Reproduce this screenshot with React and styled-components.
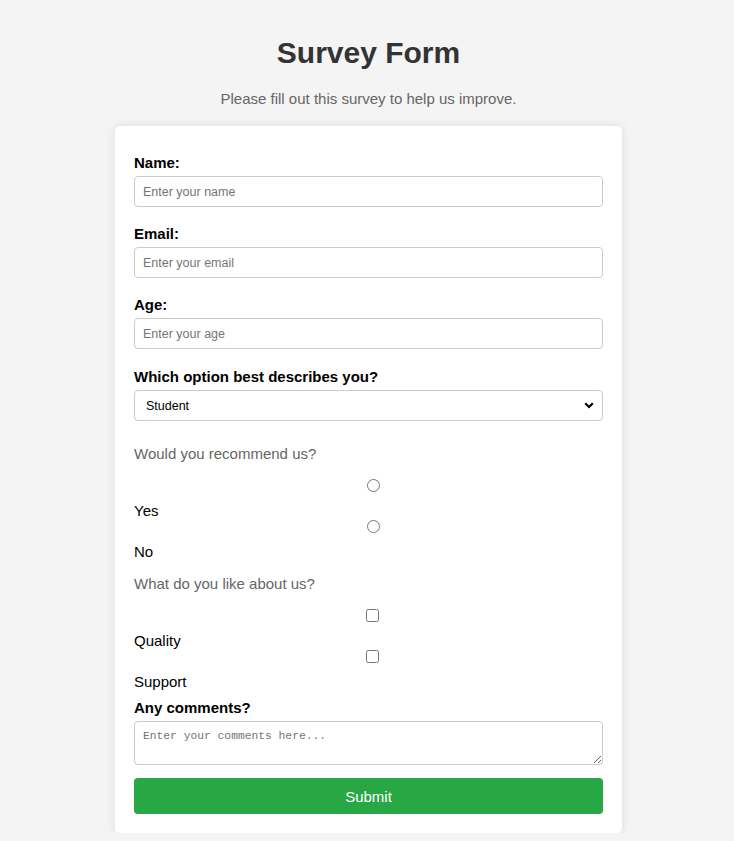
import React, { useState } from 'react';
import styled, { createGlobalStyle } from 'styled-components';

const GlobalStyle = createGlobalStyle`
  html, body {
    margin: 0;
    padding: 0;
    background: #f4f4f4;
  }
  body {
    font-family: 'Liberation Sans', Arial, sans-serif;
  }
`;

const Page = styled.div`
  padding: 36px 0 0 3px;
  display: flex;
  flex-direction: column;
  align-items: center;
`;

const Title = styled.h1`
  margin: 0;
  font-size: 30px;
  line-height: 34px;
  font-weight: bold;
  color: #333;
  text-align: center;
`;

const Subtitle = styled.p`
  margin: 20px 0 19px;
  font-size: 15px;
  line-height: 17px;
  color: #666;
  text-align: center;
`;

const Card = styled.form`
  width: 507px;
  box-sizing: border-box;
  padding: 28px 19px 19px;
  background: #fff;
  border-radius: 5px;
  box-shadow: 0 0 10px rgba(0, 0, 0, 0.1);
  display: flex;
  flex-direction: column;
`;

const Group = styled.div`
  display: flex;
  flex-direction: column;
  margin-top: ${(p) => p.$top || 0}px;
  margin-bottom: ${(p) => p.$gap || 0}px;
`;

const Label = styled.label`
  display: block;
  font-size: 15px;
  line-height: 17px;
  font-weight: bold;
  color: #000;
  margin-bottom: 5px;
`;

const fieldBase = `
  width: 100%;
  box-sizing: border-box;
  border: 1px solid #ccc;
  border-radius: 4px;
  padding: 8px;
  background: #fff;
  color: #000;
  margin: 0;
  outline: none;
`;

const TextInput = styled.input`
  ${fieldBase}
  height: 31px;
  font-family: 'Liberation Sans', Arial, sans-serif;
  font-size: 12.5px;
  &::placeholder {
    color: #757575;
  }
`;

const SelectWrap = styled.div`
  position: relative;
`;

const Select = styled.select`
  ${fieldBase}
  height: 31px;
  padding: 0 8px 0 11px;
  appearance: none;
  font-family: 'Liberation Sans', Arial, sans-serif;
  font-size: 12.5px;
`;

const Chevron = styled.svg`
  position: absolute;
  right: 9px;
  top: 12px;
  pointer-events: none;
`;

const Question = styled.p`
  margin: ${(p) => p.$top}px 0 16px;
  font-size: 15px;
  line-height: 17px;
  color: #666;
`;

const ControlLine = styled.div`
  height: 24px;
  box-sizing: border-box;
  padding: 1px 0 0 ${(p) => p.$shift}px;
  display: flex;
  justify-content: center;
  align-items: flex-start;
`;

const Choice = styled.input`
  margin: 0;
  width: 13px;
  height: 13px;
`;

const OptionLabel = styled.label`
  display: block;
  font-size: 15px;
  line-height: 17px;
  color: #000;
`;

const Comments = styled.textarea`
  ${fieldBase}
  height: 44px;
  font-family: 'Liberation Mono', 'Courier New', monospace;
  font-size: 11.3px;
  line-height: 13px;
  resize: vertical;
  &::placeholder {
    color: #757575;
  }
`;

const SubmitButton = styled.button`
  margin-top: 13px;
  width: 100%;
  height: 36px;
  border: none;
  border-radius: 4px;
  background: #28a745;
  color: #fff;
  font-family: 'Liberation Sans', Arial, sans-serif;
  font-size: 15px;
  cursor: pointer;
`;

function Option({ type, name, label, shift }) {
  return (
    <div>
      <ControlLine $shift={shift}>
        <Choice type={type} name={name} id={name + label} />
      </ControlLine>
      <OptionLabel htmlFor={name + label}>{label}</OptionLabel>
    </div>
  );
}

export default function App() {
  const [role, setRole] = useState('student');

  return (
    <>
      <GlobalStyle />
      <Page>
        <Title>Survey Form</Title>
        <Subtitle>Please fill out this survey to help us improve.</Subtitle>
        <Card onSubmit={(e) => e.preventDefault()}>
          <Group $gap={18}>
            <Label htmlFor='name'>Name:</Label>
            <TextInput id='name' type='text' placeholder='Enter your name' />
          </Group>
          <Group $gap={18}>
            <Label htmlFor='email'>Email:</Label>
            <TextInput id='email' type='email' placeholder='Enter your email' />
          </Group>
          <Group $gap={19}>
            <Label htmlFor='age'>Age:</Label>
            <TextInput id='age' type='number' placeholder='Enter your age' />
          </Group>
          <Group>
            <Label htmlFor='role'>Which option best describes you?</Label>
            <SelectWrap>
              <Select
                id='role'
                value={role}
                onChange={(e) => setRole(e.target.value)}
              >
                <option value='student'>Student</option>
                <option value='professional'>Professional</option>
                <option value='other'>Other</option>
              </Select>
              <Chevron width='10' height='7' viewBox='0 0 10 7'>
                <path
                  d='M1.2 1.2 L5 5 L8.8 1.2'
                  fill='none'
                  stroke='#000'
                  strokeWidth='2.2'
                />
              </Chevron>
            </SelectWrap>
          </Group>

          <Question $top={24}>Would you recommend us?</Question>
          <Option type='radio' name='recommend' label='Yes' shift={10} />
          <Option type='radio' name='recommend' label='No' shift={10} />

          <Question $top={15}>What do you like about us?</Question>
          <Option type='checkbox' name='like' label='Quality' shift={8} />
          <Option type='checkbox' name='like' label='Support' shift={8} />

          <Group $top={9}>
            <Label htmlFor='comments'>Any comments?</Label>
            <Comments id='comments' placeholder='Enter your comments here...' />
          </Group>
          <SubmitButton type='submit'>Submit</SubmitButton>
        </Card>
      </Page>
    </>
  );
}
